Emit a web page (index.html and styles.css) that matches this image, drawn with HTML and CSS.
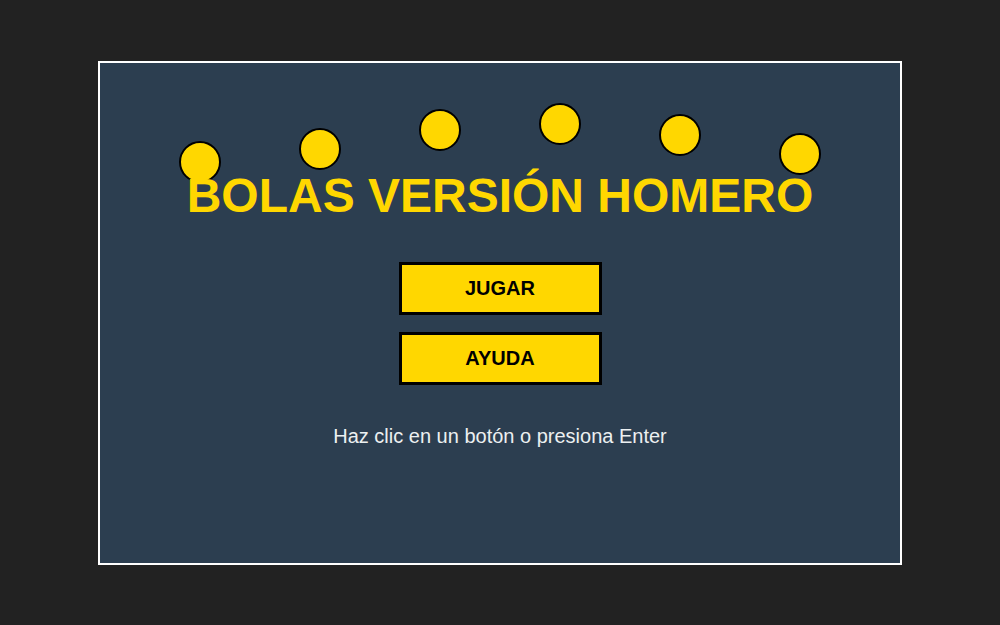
FILE: index.html
```html
<!DOCTYPE html>
<html lang="es">
<head>
<meta charset="utf-8">
<title>Bolas Versión Homero</title>
<link rel="stylesheet" href="styles.css">
</head>
<body>
  <div class="stage">
    <div class="canvas">
      <span class="ball" style="left:79px;top:78px"></span>
      <span class="ball" style="left:199px;top:65px"></span>
      <span class="ball" style="left:319px;top:46.5px"></span>
      <span class="ball" style="left:439px;top:40px"></span>
      <span class="ball" style="left:559px;top:51.5px"></span>
      <span class="ball" style="left:679px;top:70.5px"></span>
      <h1 class="title">BOLAS VERSIÓN HOMERO</h1>
      <div class="buttons">
        <button class="btn">JUGAR</button>
        <button class="btn">AYUDA</button>
      </div>
      <p class="hint">Haz clic en un botón o presiona Enter</p>
    </div>
  </div>
</body>
</html>
```

FILE: styles.css
```css
html, body {
  margin: 0;
  padding: 0;
  height: 100%;
}
body {
  background: #222222;
  font-family: "Liberation Sans", Arial, sans-serif;
}
.stage {
  height: 625px;
  display: flex;
  align-items: center;
  justify-content: center;
}
.canvas {
  position: relative;
  width: 800px;
  height: 500px;
  border: 2px solid #ffffff;
  background: #2c3e50;
  display: flex;
  flex-direction: column;
  align-items: center;
  box-sizing: content-box;
}
.ball {
  position: absolute;
  width: 38px;
  height: 38px;
  border: 2px solid #000000;
  border-radius: 50%;
  background: #ffd700;
}
.title {
  position: relative;
  z-index: 1;
  margin: 109px 0 0;
  font-size: 48px;
  line-height: 48px;
  font-weight: bold;
  color: #ffd700;
  white-space: nowrap;
}
.buttons {
  margin-top: 42px;
  display: flex;
  flex-direction: column;
  gap: 17px;
}
.btn {
  width: 203px;
  height: 53px;
  margin: 0;
  padding: 0;
  border: 3px solid #000000;
  background: #ffd700;
  color: #000000;
  font-family: "Liberation Sans", Arial, sans-serif;
  font-size: 20px;
  font-weight: bold;
  line-height: 47px;
  box-sizing: border-box;
  cursor: pointer;
}
.hint {
  margin: 39px 0 0;
  font-size: 20px;
  line-height: 24px;
  color: #ecf0f1;
}
```
